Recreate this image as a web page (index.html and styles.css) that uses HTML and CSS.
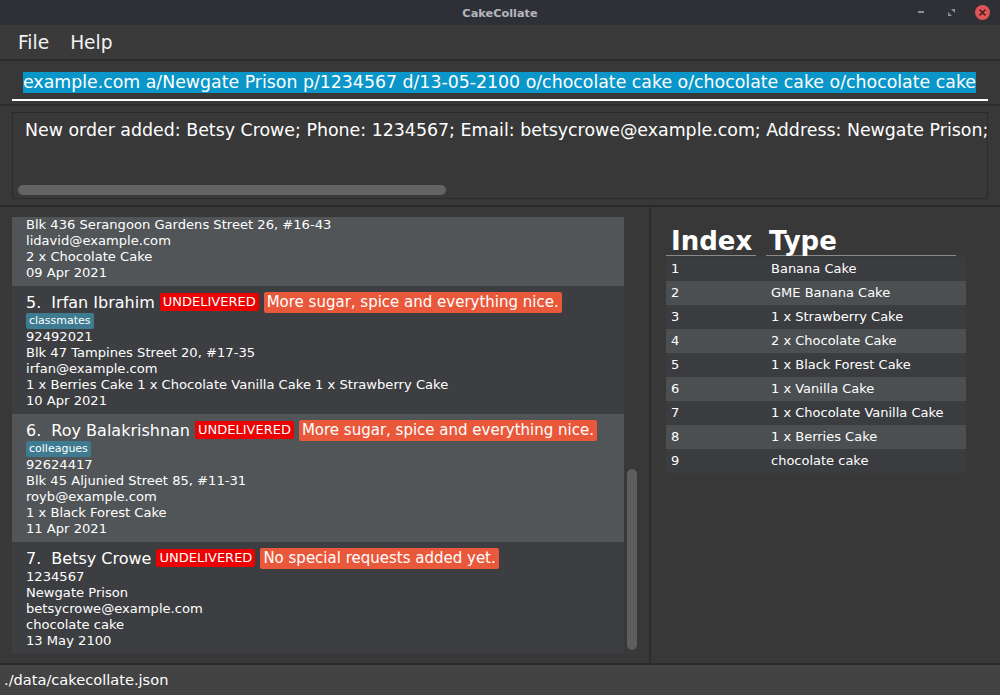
FILE: index.html
```html
<!DOCTYPE html>
<html>
<head>
<meta charset="utf-8">
<title>CakeCollate</title>
<link rel="stylesheet" href="styles.css">
</head>
<body>
<div class="window">
  <div class="titlebar">
    <span class="title">CakeCollate</span>
    <div class="controls">
      <span class="ctl-min"></span>
      <svg class="ctl-max" width="7" height="7" viewBox="0 0 7 7"><path d="M3 0H7V4Z M0 3V7H4Z" fill="#8e9097"/></svg>
      <svg class="ctl-close" width="15" height="15" viewBox="0 0 15 15"><circle cx="7.5" cy="7.5" r="7.5" fill="#e25555"/><path d="M5 5L10 10M10 5L5 10" stroke="#3b2226" stroke-width="1.6" stroke-linecap="round"/></svg>
    </div>
  </div>

  <div class="menubar">
    <span class="menu-item">File</span>
    <span class="menu-item">Help</span>
  </div>

  <div class="command-pane">
    <div class="command-box"><span class="selected">example.com a/Newgate Prison p/1234567 d/13-05-2100 o/chocolate cake o/chocolate cake o/chocolate cake</span></div>
  </div>

  <div class="result-pane">
    <div class="result-box">
      <div class="result-text">New order added: Betsy Crowe; Phone: 1234567; Email: betsycrowe@example.com; Address: Newgate Prison;</div>
      <div class="hscroll-thumb"></div>
    </div>
  </div>

  <div class="main">
    <div class="left-panel">
      <div class="list-viewport">
        <div class="list">
          <div class="cell light partial">
            <div class="line">Blk 436 Serangoon Gardens Street 26, #16-43</div>
            <div class="line">lidavid@example.com</div>
            <div class="line">2 x Chocolate Cake</div>
            <div class="line">09 Apr 2021</div>
          </div>
          <div class="cell dark">
            <div class="cell-title"><span class="cell-id">5. </span><span class="cell-name">Irfan Ibrahim</span><span class="badge">UNDELIVERED</span><span class="note">More sugar, spice and everything nice.</span></div>
            <div class="tags"><span class="tag">classmates</span></div>
            <div class="line">92492021</div>
            <div class="line">Blk 47 Tampines Street 20, #17-35</div>
            <div class="line">irfan@example.com</div>
            <div class="line">1 x Berries Cake 1 x Chocolate Vanilla Cake 1 x Strawberry Cake</div>
            <div class="line">10 Apr 2021</div>
          </div>
          <div class="cell light">
            <div class="cell-title"><span class="cell-id">6. </span><span class="cell-name">Roy Balakrishnan</span><span class="badge">UNDELIVERED</span><span class="note">More sugar, spice and everything nice.</span></div>
            <div class="tags"><span class="tag">colleagues</span></div>
            <div class="line">92624417</div>
            <div class="line">Blk 45 Aljunied Street 85, #11-31</div>
            <div class="line">royb@example.com</div>
            <div class="line">1 x Black Forest Cake</div>
            <div class="line">11 Apr 2021</div>
          </div>
          <div class="cell dark">
            <div class="cell-title"><span class="cell-id">7. </span><span class="cell-name">Betsy Crowe</span><span class="badge">UNDELIVERED</span><span class="note">No special requests added yet.</span></div>
            <div class="line">1234567</div>
            <div class="line">Newgate Prison</div>
            <div class="line">betsycrowe@example.com</div>
            <div class="line">chocolate cake</div>
            <div class="line">13 May 2100</div>
          </div>
        </div>
        <div class="vscroll"><div class="vscroll-thumb"></div></div>
      </div>
    </div>
    <div class="right-panel">
      <div class="table">
        <div class="thead">
          <div class="th th-index">Index</div>
          <div class="th th-type">Type</div>
        </div>
        <div class="tr odd"><div class="td td-index">1</div><div class="td">Banana Cake</div></div>
        <div class="tr even"><div class="td td-index">2</div><div class="td">GME Banana Cake</div></div>
        <div class="tr odd"><div class="td td-index">3</div><div class="td">1 x Strawberry Cake</div></div>
        <div class="tr even"><div class="td td-index">4</div><div class="td">2 x Chocolate Cake</div></div>
        <div class="tr odd"><div class="td td-index">5</div><div class="td">1 x Black Forest Cake</div></div>
        <div class="tr even"><div class="td td-index">6</div><div class="td">1 x Vanilla Cake</div></div>
        <div class="tr odd"><div class="td td-index">7</div><div class="td">1 x Chocolate Vanilla Cake</div></div>
        <div class="tr even"><div class="td td-index">8</div><div class="td">1 x Berries Cake</div></div>
        <div class="tr odd"><div class="td td-index">9</div><div class="td">chocolate cake</div></div>
      </div>
    </div>
  </div>

  <div class="statusbar">./data/cakecollate.json</div>
</div>
</body>
</html>
```
FILE: styles.css
```css
* { box-sizing: border-box; }
html, body { margin: 0; padding: 0; }
body {
  width: 1000px;
  height: 695px;
  overflow: hidden;
  background: #383838;
  font-family: "DejaVu Sans", "Noto Sans", sans-serif;
  color: #ffffff;
}
.window { display: flex; flex-direction: column; width: 1000px; height: 695px; }

/* title bar */
.titlebar {
  height: 25px;
  background: #2e3036;
  position: relative;
  display: flex;
  align-items: center;
  justify-content: center;
}
.title { font-size: 11.3px; font-weight: bold; color: #b4b7be; line-height: 25px; padding-top: 1px; }
.controls {
  position: absolute;
  right: 10px;
  top: 0;
  height: 25px;
  display: flex;
  align-items: center;
}
.ctl-min { width: 6px; height: 2px; background: #8e9097; margin-right: 24px; margin-top: -1px; }
.ctl-max { margin-right: 20px; margin-top: -1px; }
.ctl-close { margin-top: -1px; }

/* menu */
.menubar {
  height: 36px;
  background: #3a3a3a;
  border-bottom: 2px solid #2b2b2b;
  display: flex;
  align-items: center;
  padding-left: 18px;
  gap: 21px;
}
.menu-item { font-size: 18.6px; color: #f2f2f2; line-height: 34px; padding-top: 2px; }

/* command */
.command-pane {
  height: 45px;
  background: #383838;
  border-bottom: 2px solid #2b2b2b;
  padding: 8px 12px 0 12px;
}
.command-box {
  height: 32px;
  border-bottom: 2px solid #ffffff;
  padding: 3px 0 0 11px;
  overflow: hidden;
  white-space: nowrap;
}
.selected {
  display: inline-block;
  background: #0a96c8;
  color: #ffffff;
  font-size: 17.35px;
  line-height: 21px;
}

/* result */
.result-pane {
  height: 101px;
  background: #383838;
  border-bottom: 2px solid #2b2b2b;
  padding: 6px 12px;
}
.result-box {
  position: relative;
  height: 87px;
  border: 1px solid #2b2b2b;
  overflow: hidden;
}
.result-text {
  padding: 7px 0 0 12px;
  font-size: 17.4px;
  line-height: 20px;
  white-space: nowrap;
  color: #ffffff;
}
.hscroll-thumb {
  position: absolute;
  left: 5px;
  top: 72px;
  width: 428px;
  height: 10px;
  border-radius: 5px;
  background: #636363;
}

/* main */
.main {
  height: 458px;
  border-bottom: 2px solid #2b2b2b;
  display: flex;
}
.left-panel {
  width: 651px;
  border-right: 2px solid #2b2b2b;
  padding: 10px 0 9px 12px;
  background: #383838;
}
.list-viewport {
  height: 437px;
  display: flex;
  overflow: hidden;
}
.list { width: 612px; }
.cell { padding: 5px 14px; }
.cell.partial { padding-top: 0; }
.cell.light { background: #515558; }
.cell.dark { background: #3d3e41; }
.cell-title {
  height: 22px;
  display: flex;
  align-items: center;
  gap: 5px;
  white-space: nowrap;
}
.cell-id, .cell-name { font-size: 16px; color: #ffffff; }
.cell-id { white-space: pre; }
.badge {
  background: #ec0000;
  color: #ffffff;
  font-size: 13px;
  line-height: 18px;
  padding: 0 3px;
  border-radius: 2px;
}
.note {
  background: #e9583a;
  color: #ffffff;
  font-size: 15px;
  line-height: 21px;
  padding: 0 3px;
  border-radius: 2px;
}
.tags { height: 16px; display: flex; }
.tag {
  background: #3e7b91;
  color: #ffffff;
  font-size: 11px;
  line-height: 16px;
  padding: 0 3px;
  border-radius: 2px;
}
.line { font-size: 13.1px; line-height: 16px; color: #ffffff; white-space: nowrap; }
.vscroll {
  width: 10px;
  margin-left: 3px;
  padding-top: 252px;
}
.vscroll-thumb {
  width: 10px;
  height: 181px;
  border-radius: 5px;
  background: #5e5e5e;
}

.right-panel {
  flex: 1;
  background: #383838;
  padding: 19px 15px;
}
.table { width: 300px; }
.thead { display: flex; height: 30px; margin-bottom: 1px; }
.th {
  font-size: 26px;
  font-weight: bold;
  line-height: 30px;
  border-bottom: 1px solid #8a8a8a;
  color: #ffffff;
}
.th-index { width: 90px; padding-left: 5px; margin-right: 10px; }
.th-type { width: 190px; padding-left: 3px; }
.tr { display: flex; height: 24px; }
.tr.odd { background: #3a3c3f; }
.tr.even { background: #4b4f52; }
.td { font-size: 13px; line-height: 24px; padding-left: 5px; color: #ffffff; white-space: nowrap; }
.td-index { width: 100px; }

.statusbar {
  height: 30px;
  background: #434343;
  font-size: 14.6px;
  line-height: 30px;
  padding-left: 4px;
  color: #ffffff;
}
```
